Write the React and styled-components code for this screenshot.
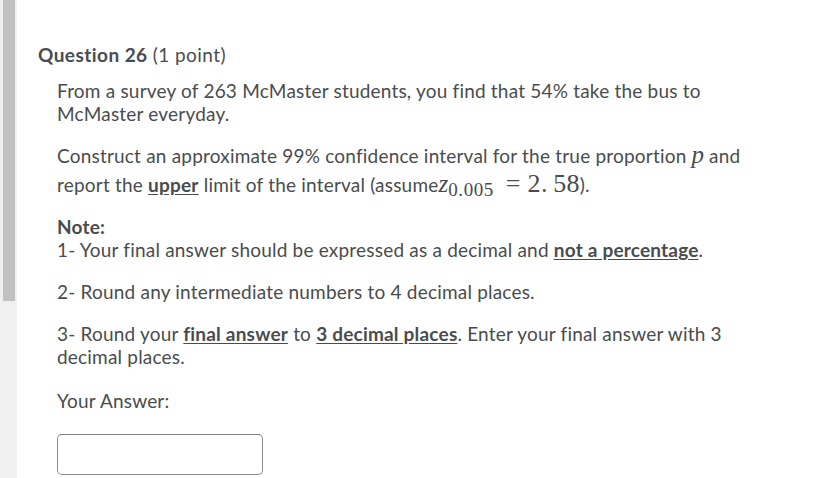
import React from 'react'
import styled, { createGlobalStyle } from 'styled-components'

const GlobalStyle = createGlobalStyle`
  html, body {
    margin: 0;
    padding: 0;
    background: #ffffff;
  }
  body {
    font-family: Lato, "Liberation Sans", sans-serif;
    color: #494c4e;
    font-variant-ligatures: none;
  }
`

const Page = styled.div`
  display: flex;
  width: 823px;
  height: 478px;
  overflow: hidden;
`

const Track = styled.div`
  width: 17px;
  flex-shrink: 0;
  background: #f0f0f0;
  display: flex;
  justify-content: center;
`

const Thumb = styled.div`
  width: 12px;
  height: 301px;
  margin-left: 1px;
  background: #c1c1c1;
`

const Main = styled.div`
  flex: 1;
  padding: 42px 0 0 21px;
`

const Title = styled.h2`
  margin: 0;
  font-size: 19px;
  letter-spacing: 0.45px;
  font-weight: 700;
  line-height: 26px;
  color: #494c4e;

  span {
    font-weight: 400;
  }
`

const Body = styled.div`
  padding: 11px 0 0 19px;
  width: 700px;
`

const Para = styled.p`
  margin: 0 0 ${(p) => p.$gap ?? 19}px;
  font-size: 19px;
  letter-spacing: 0.2px;
  line-height: 23px;
`

const Strong = styled.strong`
  font-weight: 700;
  text-decoration: ${(p) => (p.$u ? 'underline' : 'none')};
  text-underline-offset: 2px;
`

const MathVar = styled.span`
  font-family: "Liberation Serif", "DejaVu Serif", serif;
  font-style: italic;
  font-size: 25px;
  letter-spacing: 0;
  line-height: 0;
`

const MathSub = styled.sub`
  font-family: "Liberation Serif", "DejaVu Serif", serif;
  font-style: normal;
  font-size: 19px;
  letter-spacing: 0.6px;
  vertical-align: -4px;
  line-height: 0;
`

const MathNum = styled.span`
  display: inline-block;
  padding-top: 4px;
  font-family: "Liberation Serif", "DejaVu Serif", serif;
  font-size: 26px;
  letter-spacing: 0.3px;
  line-height: 26px;
`

const Answer = styled.div`
  margin-top: 22px;
  width: 206px;
  height: 41px;
  box-sizing: border-box;
  border: 1px solid #8a8c8e;
  border-top-color: #7a7c7e;
  border-radius: 5px;
  background: #fff;
`

export default function App() {
  return (
    <>
      <GlobalStyle />
      <Page>
        <Track>
          <Thumb />
        </Track>
        <Main>
          <Title>
            Question 26 <span>(1 point)</span>
          </Title>
          <Body>
            <Para>
              From a survey of 263 McMaster students, you find that 54% take the bus to McMaster everyday.
            </Para>
            <Para $gap={18}>
              Construct an approximate 99% confidence interval for the true proportion <MathVar>p</MathVar> and
              report the <Strong $u>upper</Strong> limit of the interval (assume<MathVar>z</MathVar>
              <MathSub>0.005</MathSub> <MathNum>&nbsp;=&nbsp;2.&thinsp;58</MathNum>).
            </Para>
            <Para $gap={19}>
              <Strong>Note:</Strong>
              <br />
              1- Your final answer should be expressed as a decimal and <Strong $u>not a percentage</Strong>.
            </Para>
            <Para $gap={19}>2- Round any intermediate numbers to 4 decimal places.</Para>
            <Para $gap={21}>
              3- Round your <Strong $u>final answer</Strong> to <Strong $u>3 decimal places</Strong>. Enter your final
              answer with 3 decimal places.
            </Para>
            <Para $gap={0}>Your Answer:</Para>
            <Answer />
          </Body>
        </Main>
      </Page>
    </>
  )
}
